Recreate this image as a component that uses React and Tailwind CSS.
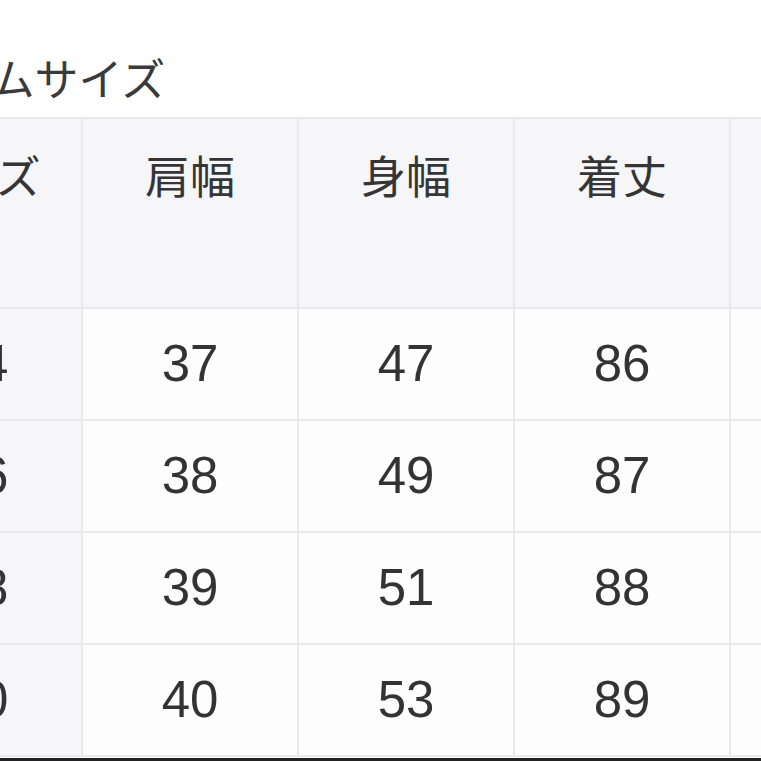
import React from "react";

const headers = ["サイズ", "肩幅", "身幅", "着丈", "袖丈"];
const rows = [
  ["34", "37", "47", "86", "60"],
  ["36", "38", "49", "87", "61"],
  ["38", "39", "51", "88", "62"],
  ["40", "40", "53", "89", "63"],
];

export default function App() {
  return (
    <div className="w-[761px] h-[761px] overflow-hidden bg-white flex flex-col">
      <div className="ml-[-135px] flex flex-col flex-1 min-h-0">
        <div
          className="h-[117px] pt-[55px] ml-[-2px] text-[44px] leading-[44px] text-[#3a3a3a] whitespace-nowrap"
          style={{ fontFamily: '"Noto Sans CJK JP", sans-serif' }}
        >
          アイテムサイズ
        </div>
        <div className="grid grid-cols-[repeat(5,214px)] grid-rows-[188px_repeat(4,110px)] gap-[2px] bg-[#e9e9ec] p-[2px] w-max">
          {headers.map((h) => (
            <div
              key={h}
              className="bg-[#f6f6f8] flex justify-center pt-[33px] text-[45px] leading-[45px] text-[#353535]"
              style={{ fontFamily: '"Noto Sans CJK JP", sans-serif' }}
            >
              {h}
            </div>
          ))}
          {rows.map((r, ri) =>
            r.map((c, ci) => (
              <div
                key={ri + "-" + ci}
                className={
                  (ci === 0 ? "bg-[#f6f6f8] pl-[12px] " : "bg-[#fdfdfd] ") +
                  "flex items-center justify-center text-[51px] text-[#333] font-['Liberation_Sans',sans-serif]"
                }
              >
                {c}
              </div>
            ))
          )}
        </div>
      </div>
      <div className="h-[3px] bg-[#222] shrink-0" />
    </div>
  );
}
